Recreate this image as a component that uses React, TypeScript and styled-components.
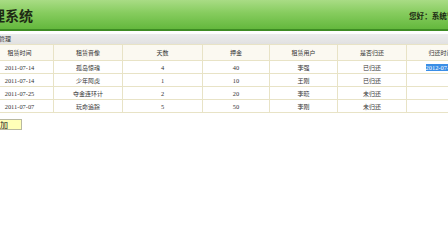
import React from 'react';
import styled, { createGlobalStyle } from 'styled-components';

const GlobalStyle = createGlobalStyle`
  html, body {
    margin: 0;
    padding: 0;
    background: #ffffff;
    overflow: hidden;
  }
`;

const Page = styled.div`
  width: 448px;
  height: 252px;
  overflow: hidden;
  font-family: "Noto Sans CJK SC", "Liberation Sans", sans-serif;
  color: #333333;
`;

const TopBar = styled.div`
  height: 29px;
  display: flex;
  align-items: center;
  background: linear-gradient(#a9dc85, #86cc5e 45%, #64b83d);
  border-bottom: 2px solid #3e8c24;
  overflow: hidden;
`;

const Title = styled.h1`
  flex: 1;
  margin: 0 0 0 -23px;
  font-size: 14px;
  font-weight: bold;
  color: #1d2a14;
  white-space: nowrap;
  line-height: 1;
`;

const Welcome = styled.div`
  flex: none;
  width: 39px;
  overflow: hidden;
  white-space: nowrap;
  font-size: 7.6px;
  font-weight: bold;
  color: #1d2a14;
  padding-top: 2px;
`;

const SectionBar = styled.div`
  margin-top: 3px;
  height: 10px;
  line-height: 10px;
  background: linear-gradient(#ececec, #e1e1e1);
  font-size: 6px;
  color: #333;
  text-indent: -13px;
  white-space: nowrap;
  overflow: hidden;
`;

const TableWrap = styled.div`
  overflow: hidden;
`;

const Grid = styled.table`
  margin-left: -15px;
  width: 489px;
  table-layout: fixed;
  border-collapse: collapse;
`;

const HeadCell = styled.th`
  height: 15px;
  padding: 0;
  background: #fbf9f1;
  border: 1px solid #e8e3c6;
  font-size: 6px;
  font-weight: normal;
  color: #333;
  text-align: center;
  white-space: nowrap;
  overflow: hidden;
`;

const Cell = styled.td<{ $serif?: boolean }>`
  height: 12px;
  padding: 0;
  border: 1px solid #e8e3c6;
  background: #ffffff;
  font-family: ${(p) => (p.$serif ? '"Liberation Serif", serif' : '"Noto Sans CJK SC", sans-serif')};
  font-size: ${(p) => (p.$serif ? '6.4px' : '6px')};
  color: #333;
  text-align: center;
  white-space: nowrap;
  overflow: hidden;
`;

const Selected = styled.span`
  background: #3a8ee6;
  color: #ffffff;
`;

const AddButton = styled.button`
  display: block;
  margin: 6px 0 0 -22px;
  width: 44px;
  height: 11px;
  padding: 0;
  background: #ffffb8;
  border: 1px solid #b9b9a0;
  font-family: "Noto Sans CJK SC", sans-serif;
  font-size: 8px;
  line-height: 9px;
  color: #222;
`;

const widths = [68, 69, 80, 67, 68, 69, 68];
const heads = ['租赁时间', '租赁音像', '天数', '押金', '租赁用户', '是否归还', '归还时间'];

const rows = [
  { date: '2011-07-14', title: '孤岛惊魂', days: '4', deposit: '40', user: '李强', back: '已归还', backDate: '2012-07-18' },
  { date: '2011-07-14', title: '少年阿虎', days: '1', deposit: '10', user: '王刚', back: '已归还', backDate: '' },
  { date: '2011-07-25', title: '夺金连环计', days: '2', deposit: '20', user: '李晓', back: '未归还', backDate: '' },
  { date: '2011-07-07', title: '玩命追踪', days: '5', deposit: '50', user: '李刚', back: '未归还', backDate: '' },
];

const App: React.FC = () => {
  return (
    <Page>
      <GlobalStyle />
      <TopBar>
        <Title>管理系统</Title>
        <Welcome>您好：系统管理员</Welcome>
      </TopBar>
      <SectionBar>租赁管理</SectionBar>
      <TableWrap>
        <Grid>
          <colgroup>
            {widths.map((w, i) => (
              <col key={i} style={{ width: w }} />
            ))}
          </colgroup>
          <thead>
            <tr>
              {heads.map((h) => (
                <HeadCell key={h}>{h}</HeadCell>
              ))}
            </tr>
          </thead>
          <tbody>
            {rows.map((r, i) => (
              <tr key={i}>
                <Cell $serif>{r.date}</Cell>
                <Cell>{r.title}</Cell>
                <Cell $serif>{r.days}</Cell>
                <Cell $serif>{r.deposit}</Cell>
                <Cell>{r.user}</Cell>
                <Cell>{r.back}</Cell>
                <Cell $serif>{r.backDate && <Selected>{r.backDate}</Selected>}</Cell>
              </tr>
            ))}
          </tbody>
        </Grid>
      </TableWrap>
      <AddButton>添加</AddButton>
    </Page>
  );
};

export default App;
